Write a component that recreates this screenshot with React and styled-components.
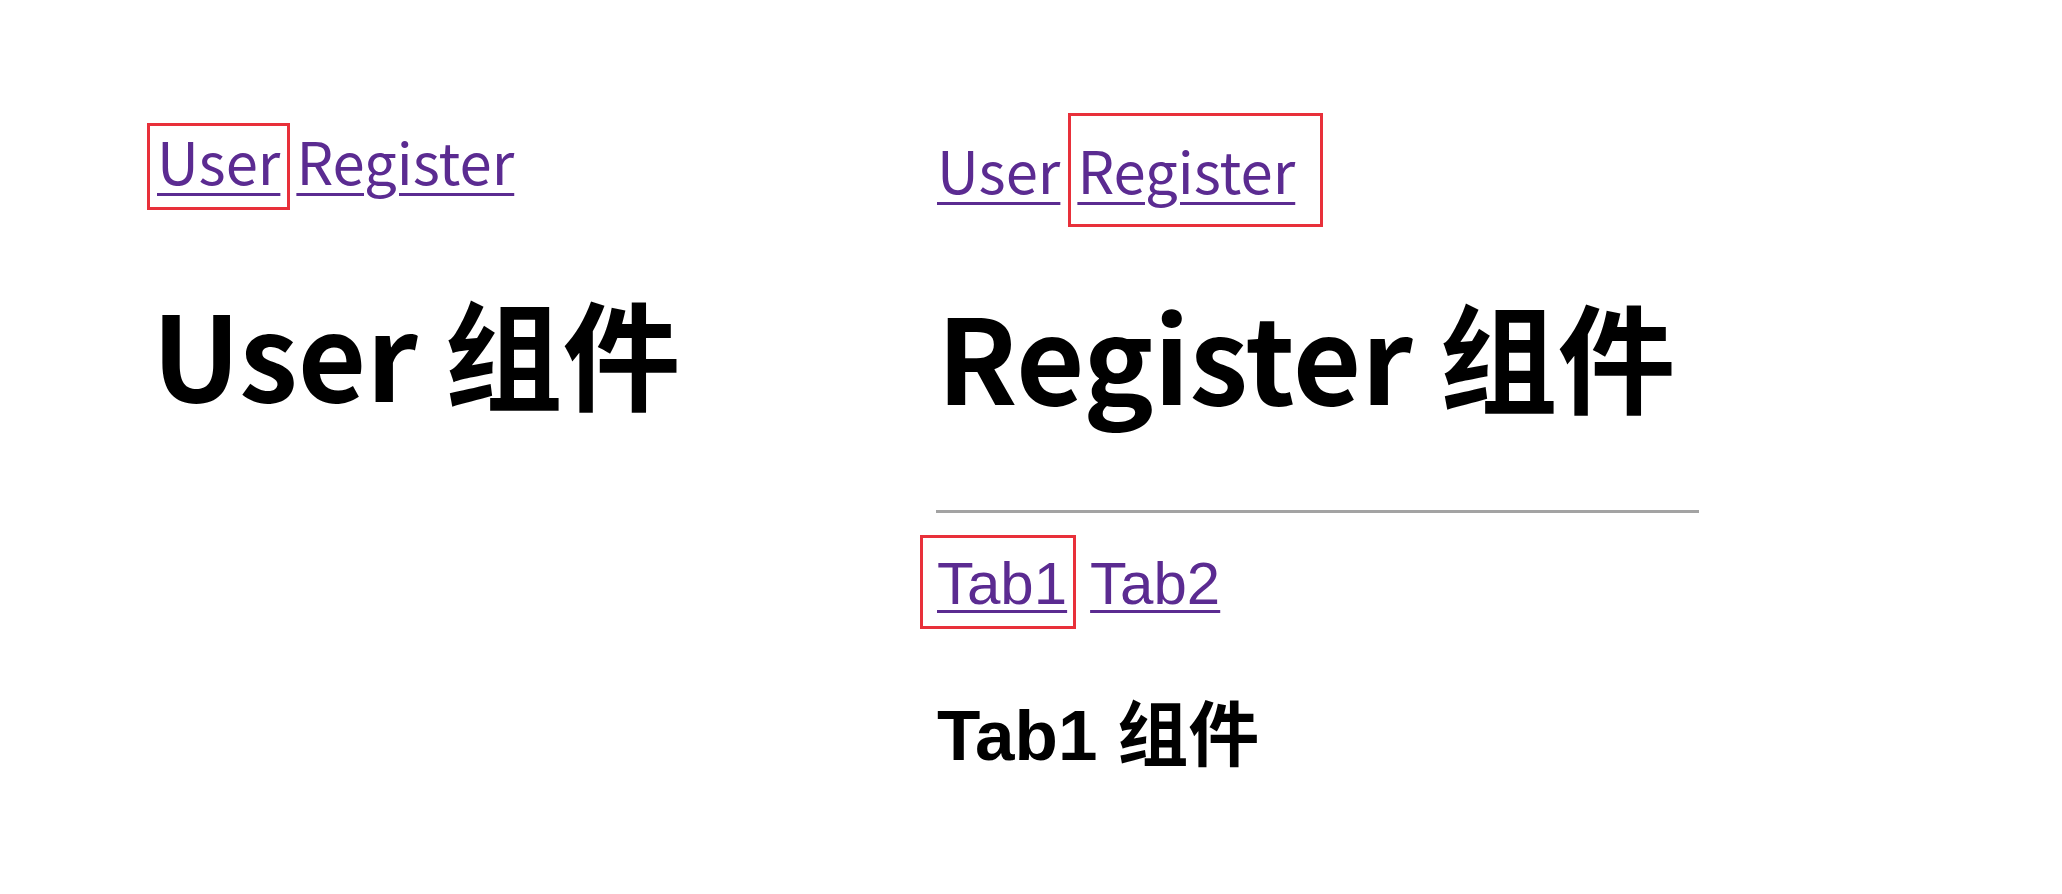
import React from "react";
import styled, { createGlobalStyle } from "styled-components";

const GlobalStyle = createGlobalStyle`
	html, body {
		margin: 0;
		padding: 0;
		background: #ffffff;
	}
	body {
		font-family: "Noto Sans CJK SC", "Noto Sans", sans-serif;
		color: #000000;
	}
`;

const RED = "#e8303a";
const LINK = "#5b2b91";

const Page = styled.main`
	display: grid;
	grid-template-columns: 790px 1fr;
	align-items: start;
	padding-left: 147px;
	min-height: 894px;
	box-sizing: border-box;
`;

const Panel = styled.section`
	display: flex;
	flex-direction: column;
	align-items: flex-start;
	padding-top: ${(p) => p.$top}px;
`;

const Nav = styled.nav`
	display: flex;
	align-items: baseline;
	gap: ${(p) => p.$gap}px;
	margin-left: ${(p) => p.$shift || 0}px;
	margin-top: ${(p) => p.$mt || 0}px;
`;

const NavLink = styled.a`
	display: inline-block;
	font-family: ${(p) =>
		p.$latin
			? `"Liberation Sans", "Noto Sans CJK SC", sans-serif`
			: `"Noto Sans CJK SC", "Noto Sans", sans-serif`};
	font-size: ${(p) => (p.$latin ? 60 : 58)}px;
	line-height: ${(p) => (p.$latin ? 64 : 68)}px;
	color: ${LINK};
	text-decoration: underline;
	text-decoration-thickness: 3px;
	text-underline-offset: ${(p) => (p.$latin ? 6 : 8)}px;
	cursor: pointer;
	padding: ${(p) => p.$pad || "0"};
	border: ${(p) => (p.$active ? `3px solid ${RED}` : "none")};
`;

const Title = styled.h1`
	margin: ${(p) => p.$mt}px 0 0 ${(p) => p.$ml || 0}px;
	font-size: 118px;
	line-height: 144px;
	font-weight: 700;
	letter-spacing: 0;
`;

const Rule = styled.hr`
	width: 763px;
	margin: 84px 0 0 -1px;
	border: none;
	border-top: 3px solid #a3a3a3;
	height: 0;
`;

const SubTitle = styled.h3`
	margin: 65px 0 0;
	font-family: "Liberation Sans", "Noto Sans CJK SC", sans-serif;
	font-size: 71px;
	line-height: 84px;
	font-weight: 700;
`;

export default function App() {
	return (
		<>
			<GlobalStyle />
			<Page>
				<Panel $top={123}>
					<Nav $gap={6}>
						<NavLink $active $pad="0 7px 13px 7px">
							User
						</NavLink>
						<NavLink>Register</NavLink>
					</Nav>
					<Title $mt={69} $ml={5}>
						User 组件
					</Title>
				</Panel>

				<Panel $top={113}>
					<Nav $gap={8}>
						<NavLink>User</NavLink>
						<NavLink $active $pad="19px 25px 21px 6px">
							Register
						</NavLink>
					</Nav>
					<Title $mt={55}>Register 组件</Title>
					<Rule />
					<Nav $gap={14} $shift={-17} $mt={22}>
						<NavLink $latin $active $pad="14px 6px 10px 14px">
							Tab1
						</NavLink>
						<NavLink $latin>Tab2</NavLink>
					</Nav>
					<SubTitle>Tab1 组件</SubTitle>
				</Panel>
			</Page>
		</>
	);
}
